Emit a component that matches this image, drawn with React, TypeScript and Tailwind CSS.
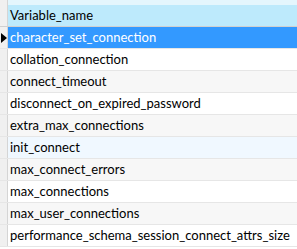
const rows = [
  'character_set_connection',
  'collation_connection',
  'connect_timeout',
  'disconnect_on_expired_password',
  'extra_max_connections',
  'init_connect',
  'max_connect_errors',
  'max_connections',
  'max_user_connections',
  'performance_schema_session_connect_attrs_size',
];

export default function App() {
  return (
    <div className="w-[297px] h-[249px] overflow-hidden bg-white text-[13px] text-black font-['Lato','Noto_Sans',sans-serif]">
      {/* header */}
      <div className="flex h-[27px] border-b border-[#d0d0d0]">
        <div className="w-[8px] shrink-0 bg-[#f0f0f0] border-r border-[#d5d5d5]" />
        <div className="flex-1 flex flex-col">
          <div className="h-[5px] bg-[#e4f6fd]" />
          <div className="flex-1 bg-[#bdeafc] pl-[2px] flex items-center leading-none">Variable_name</div>
        </div>
      </div>
      {rows.map((name, i) => {
        const selected = i === 0;
        const hover = i === 5;
        const bg = selected ? 'bg-[#3399ff] text-white' : hover ? 'bg-[#f0f8ff]' : i % 2 === 0 ? 'bg-[#f7f7f7]' : 'bg-white';
        return (
          <div key={name} className="flex h-[22px] border-b border-[#e6e6e6]">
            <div className="w-[8px] shrink-0 bg-[#f0f0f0] border-r border-[#d5d5d5] flex items-center">
              {selected && (
                <svg width="6" height="10" viewBox="0 0 6 10" className="ml-[1px]">
                  <path d="M0 0 L6 5 L0 10 Z" fill="#000" />
                </svg>
              )}
            </div>
            <div className={`flex-1 min-w-0 flex items-center pl-[2px] whitespace-nowrap leading-none ${bg}`}>{name}</div>
          </div>
        );
      })}
    </div>
  );
}
